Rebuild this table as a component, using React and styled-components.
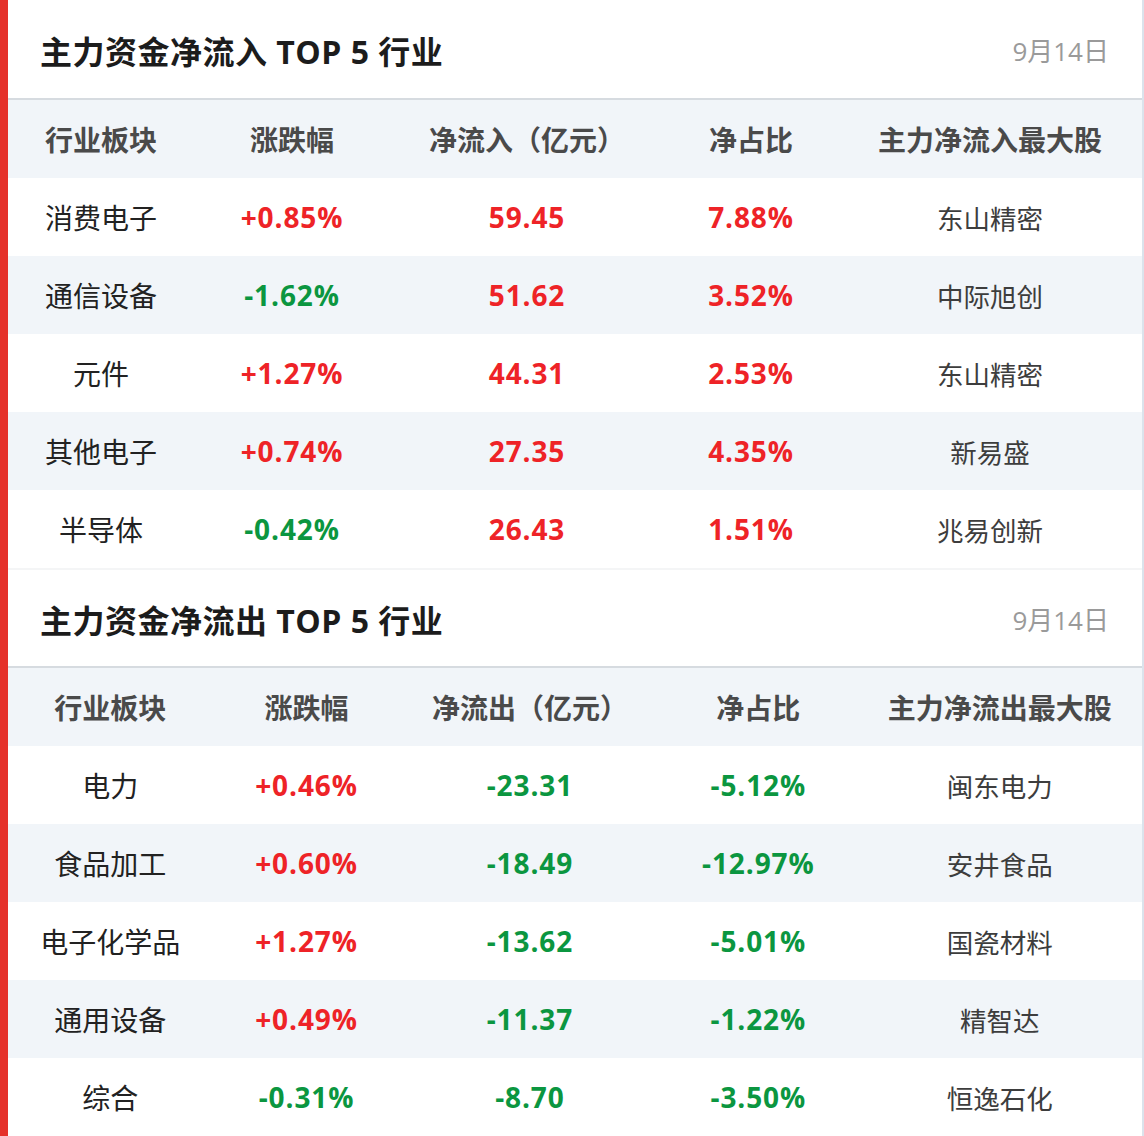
import React from 'react'
import styled, {createGlobalStyle} from 'styled-components'

const GlobalStyle = createGlobalStyle`
  html, body {
    margin: 0;
    padding: 0;
    background: #ffffff;
  }
  body {
    font-family: "Open Sans", "Noto Sans CJK SC", sans-serif;
  }
`

const Page = styled.div`
  width: 1144px;
  box-sizing: border-box;
  border-left: 8px solid #e5312a;
  border-right: 2px solid #dbe3ec;
  background: #fff;
`

const Section = styled.section`
  & + & {
    border-top: 2px solid #f4f5f6;
  }
`

const TitleBar = styled.div`
  height: ${p => p.$h}px;
  box-sizing: border-box;
  display: flex;
  align-items: center;
  justify-content: space-between;
  padding: 1px 33px 0 32px;
  border-bottom: 2px solid #d6dbe0;
  h2 {
    margin: 0;
    font-size: 32px;
    font-weight: 700;
    color: #1c1c1c;
    letter-spacing: 0.5px;
  }
  span {
    font-size: 26px;
    color: #9a9a9a;
  }
`

const Row = styled.div`
  display: grid;
  grid-template-columns: ${p => p.$cols};
  height: 78px;
  align-items: center;
  background: ${p => (p.$shade ? '#f1f5f9' : '#ffffff')};
`

const HeadCell = styled.div`
  text-align: center;
  font-size: 28px;
  font-weight: 700;
  color: #4a4a4a;
  white-space: nowrap;
`

const Cell = styled.div`
  text-align: center;
  font-size: 28px;
  white-space: nowrap;
  color: #222;
`

const NumCell = styled(Cell)`
  font-weight: 700;
  letter-spacing: 0.9px;
  color: ${p => (p.$down ? '#0b9640' : '#ee2327')};
`

const StockCell = styled(Cell)`
  font-size: 26.5px;
  color: #3d3d3d;
`

const isDown = v => v.startsWith('-')

const inflow = [
  ['消费电子', '+0.85%', '59.45', '7.88%', '东山精密'],
  ['通信设备', '-1.62%', '51.62', '3.52%', '中际旭创'],
  ['元件', '+1.27%', '44.31', '2.53%', '东山精密'],
  ['其他电子', '+0.74%', '27.35', '4.35%', '新易盛'],
  ['半导体', '-0.42%', '26.43', '1.51%', '兆易创新'],
]

const outflow = [
  ['电力', '+0.46%', '-23.31', '-5.12%', '闽东电力'],
  ['食品加工', '+0.60%', '-18.49', '-12.97%', '安井食品'],
  ['电子化学品', '+1.27%', '-13.62', '-5.01%', '国瓷材料'],
  ['通用设备', '+0.49%', '-11.37', '-1.22%', '精智达'],
  ['综合', '-0.31%', '-8.70', '-3.50%', '恒逸石化'],
]

const FlowTable = ({title, date, heads, rows, cols, titleHeight}) => (
  <Section>
    <TitleBar $h={titleHeight}>
      <h2>{title}</h2>
      <span>{date}</span>
    </TitleBar>
    <Row $cols={cols} $shade>
      {heads.map(h => (
        <HeadCell key={h}>{h}</HeadCell>
      ))}
    </Row>
    {rows.map((r, i) => (
      <Row key={r[0]} $cols={cols} $shade={i % 2 === 1}>
        <Cell>{r[0]}</Cell>
        <NumCell $down={isDown(r[1])}>{r[1]}</NumCell>
        <NumCell $down={isDown(r[2])}>{r[2]}</NumCell>
        <NumCell $down={isDown(r[3])}>{r[3]}</NumCell>
        <StockCell>{r[4]}</StockCell>
      </Row>
    ))}
  </Section>
)

const App = () => (
  <>
    <GlobalStyle />
    <Page>
      <FlowTable
        title="主力资金净流入 TOP 5 行业"
        date="9月14日"
        heads={['行业板块', '涨跌幅', '净流入（亿元）', '净占比', '主力净流入最大股']}
        rows={inflow}
        cols="186fr 196fr 274fr 174fr 304fr"
        titleHeight={100}
      />
      <FlowTable
        title="主力资金净流出 TOP 5 行业"
        date="9月14日"
        heads={['行业板块', '涨跌幅', '净流出（亿元）', '净占比', '主力净流出最大股']}
        rows={outflow}
        cols="204fr 188fr 258fr 198fr 284fr"
        titleHeight={98}
      />
    </Page>
  </>
)

export default App
